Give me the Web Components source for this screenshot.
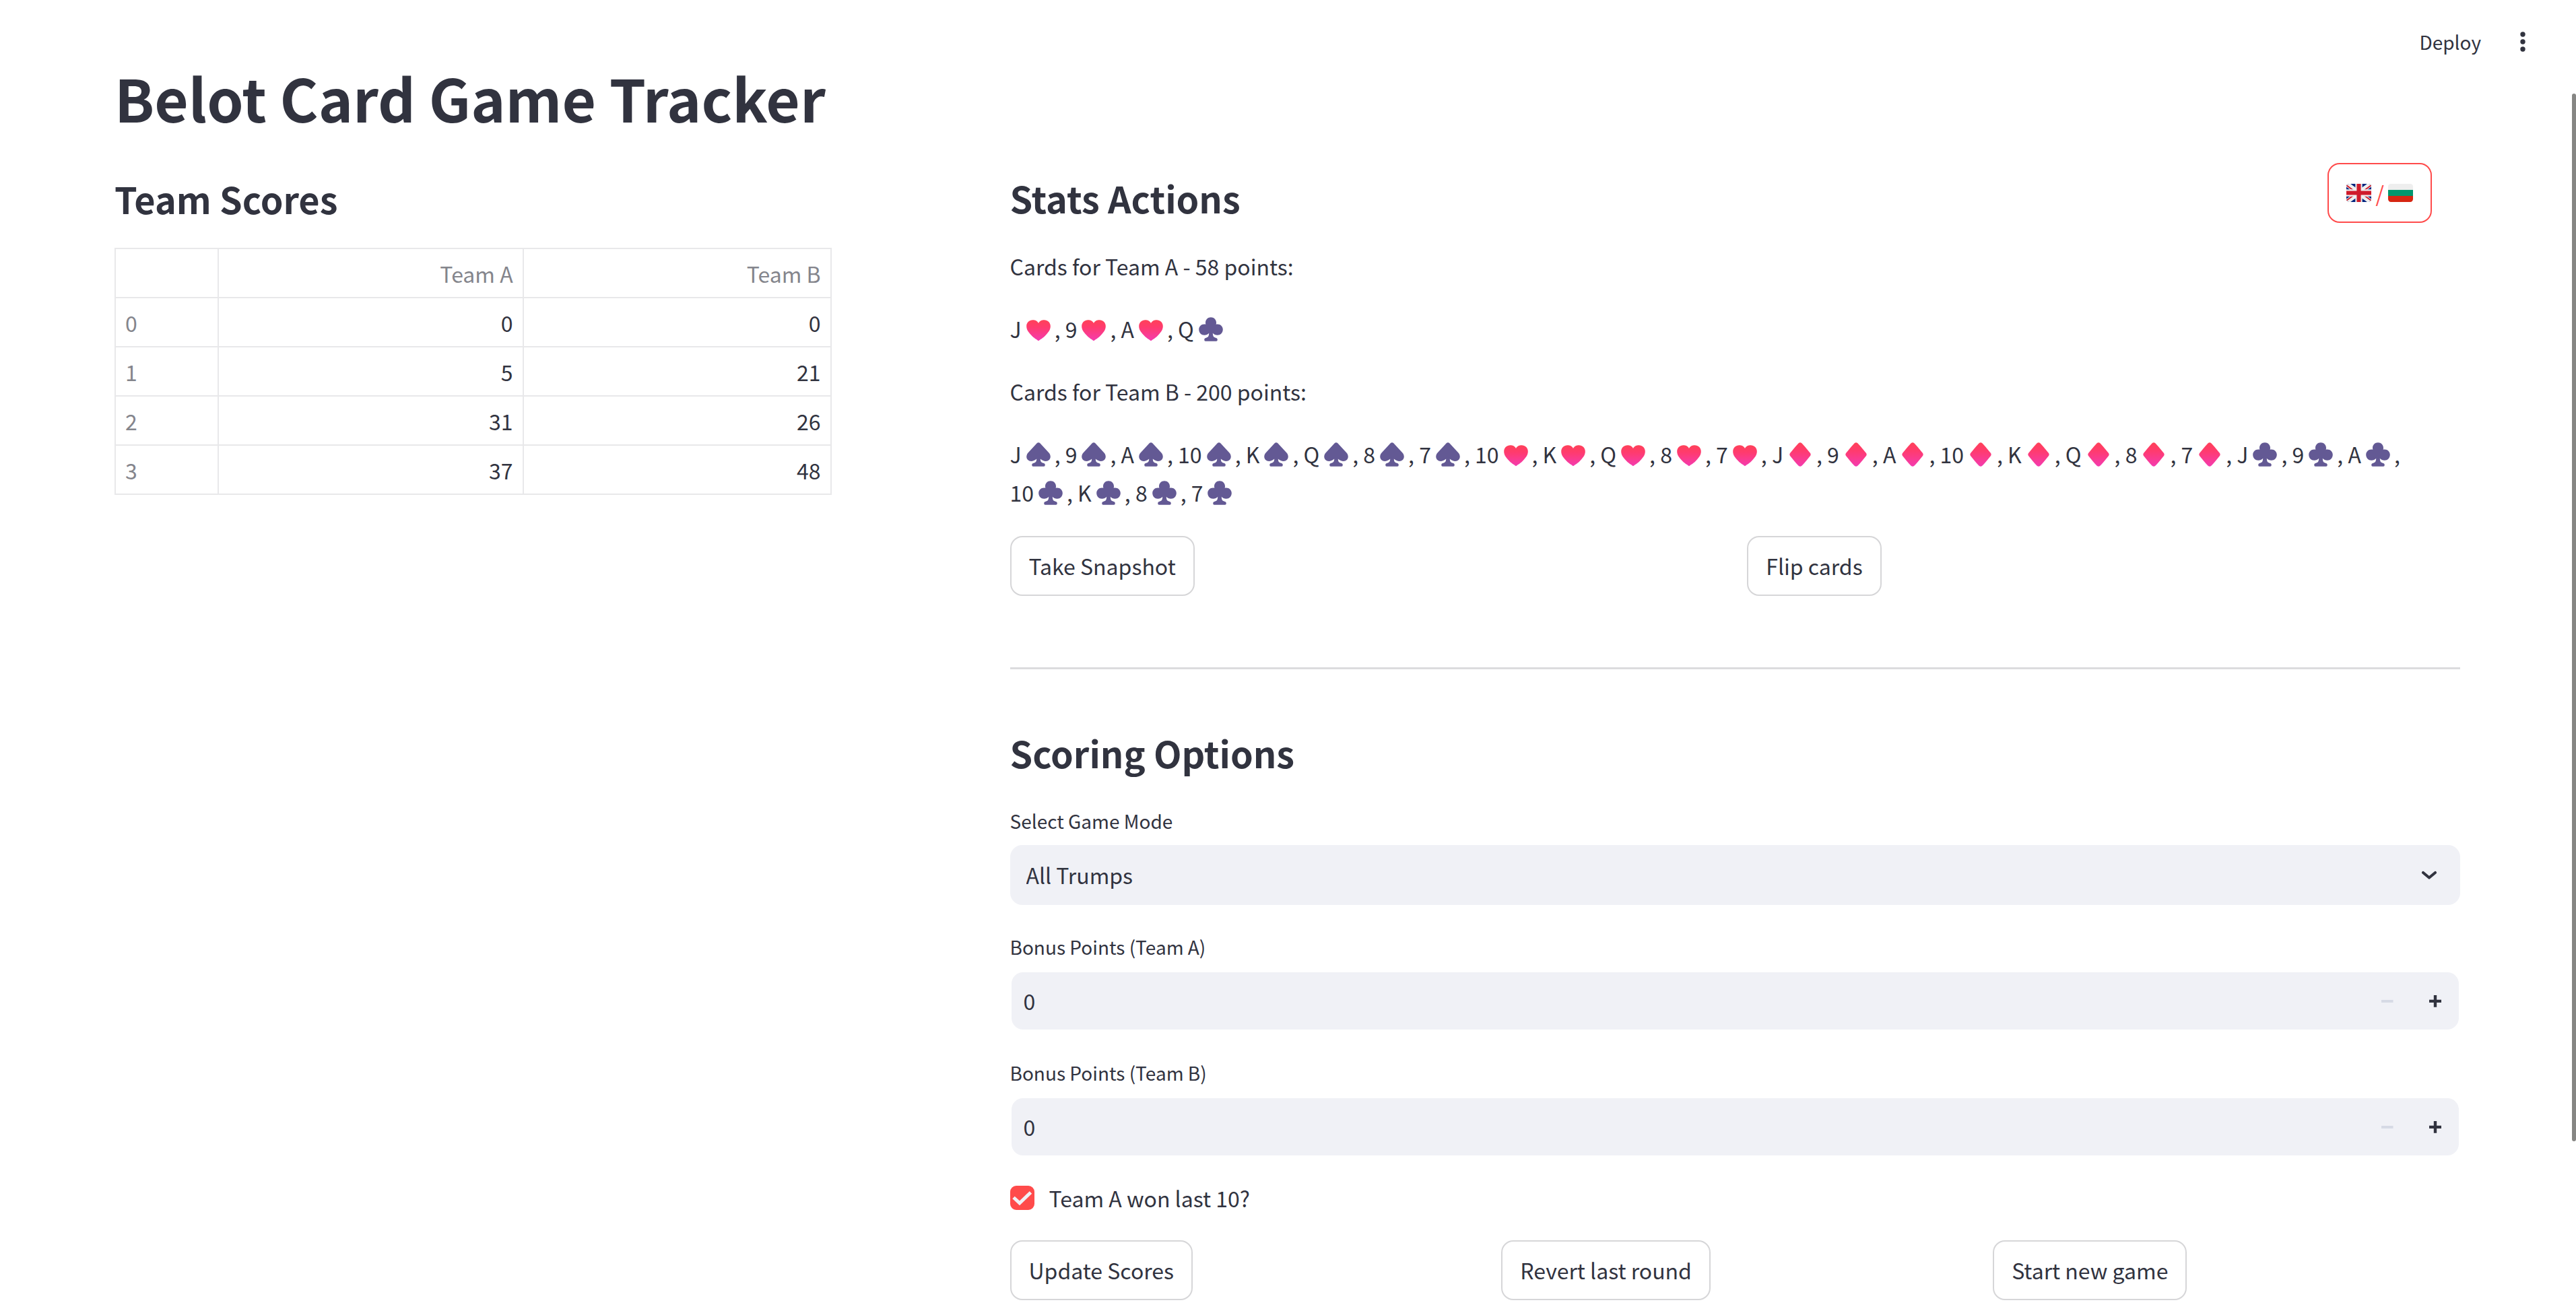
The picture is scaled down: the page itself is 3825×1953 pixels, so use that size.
<!DOCTYPE html>
<html lang="en">
<head>
<meta charset="utf-8">
<title>Belot Card Game Tracker</title>
<style>
  html, body { margin: 0; }
  body {
    --text: #31333f;
    --muted: #84858c;
    --line: #d6d6d8;
    --field: #f0f1f6;
    --accent: #ff4b4b;
    color: var(--text);
    background: #fff;
    font-family: "Noto Sans CJK SC", "Noto Sans", sans-serif;
    font-size: 32px;
    line-height: 57px;
  }
</style>
</head>
<body>
<belot-app></belot-app>

<script>
const define = (name, html, setup) => {
  const template = document.createElement('template');
  template.innerHTML = html;
  customElements.define(name, class extends HTMLElement {
    constructor() {
      super();
      this.attachShadow({ mode: 'open' });
    }
    connectedCallback() {
      if (this.shadowRoot.childNodes.length) return;
      this.shadowRoot.append(template.content.cloneNode(true));
      if (setup) setup(this, this.shadowRoot);
    }
  });
};

/* Section heading */
define('section-title', `
  <style>
    :host { display: block; }
    h2 { margin: 0; font-size: 54px; line-height: 74px; font-weight: 600; }
  </style>
  <h2><slot></slot></h2>`);

/* Outlined button */
define('action-button', `
  <style>
    :host { display: block; }
    button {
      display: flex; align-items: center; gap: 6px;
      box-sizing: border-box; height: 89px; padding: 0 26px;
      border: 2px solid var(--line); border-radius: 18px;
      background: #fff; color: inherit; font: inherit; cursor: pointer;
      white-space: nowrap;
    }
    :host([active]) button { border-color: var(--accent); color: var(--accent); }
  </style>
  <button type="button"><slot></slot></button>`);

/* Top bar: deploy and overflow menu */
define('app-toolbar', `
  <style>
    :host { display: flex; justify-content: flex-end; align-items: center; gap: 44px; padding: 40px 61px 2px 0; height: 44px; }
    button { display: flex; align-items: center; padding: 0; border: 0; background: none; color: inherit; font: inherit; font-size: 28px; line-height: 44px; cursor: pointer; }
  </style>
  <button type="button">Deploy</button>
  <button type="button" aria-label="Main menu">
    <svg width="36" height="36" viewBox="0 0 36 36" fill="currentColor"><circle cx="18" cy="7" r="3.7"/><circle cx="18" cy="18" r="3.7"/><circle cx="18" cy="29" r="3.7"/></svg>
  </button>`);

/* Suit symbols */
const RED = id => `<defs><linearGradient id="${id}" x1="0" y1="0" x2="0" y2="1"><stop offset="0" stop-color="#ff4158"/><stop offset=".35" stop-color="#ff3b6e"/><stop offset="1" stop-color="#f43bb0"/></linearGradient></defs>`;
const SUITS = {
  hearts: RED('h') + '<path fill="url(#h)" d="M18 35.2C15 33 11.500 31.500 7 26.500C2.500 21.500.2 18.500.2 13.200C.2 8 4.500 4.200 9.500 4.200C13 4.200 16.300 5.500 18 9C19.700 5.500 23 4.200 26.500 4.200C31.500 4.200 35.800 8 35.800 13.200C35.800 18.500 33.500 21.500 29 26.500C24.500 31.500 21 33 18 35.200Z"/>',
  diamonds: RED('d') + '<path fill="url(#d)" d="M15.900.9Q18-.6 20.100.9Q23 3.500 33 16Q34.300 18 33 20Q23 32.500 20.100 35.100Q18 36.600 15.900 35.100Q13 32.500 3 20Q1.700 18 3 16Q13 3.500 15.900.9Z"/>',
  spades: '<path fill="#635994" d="M15.400 1.400Q18-.8 20.600 1.400L33.500 15.500C36.300 18.800 36.600 23.500 33.800 26C30.800 28.800 25.500 28.600 20.800 24.500C21 28.500 22 29.800 24.500 30.500Q27.800 31.200 27.800 33.500T26 35.800H10Q8.200 35.800 8.200 33.500T11.500 30.500C14 29.800 15 28.500 15.200 24.500C10.500 28.600 5.200 28.800 2.200 26C-.6 23.500-.3 18.800 2.500 15.500Z"/>',
  clubs: '<path fill="#635994" d="M18 .2C22.500.2 26 3.700 26 8.200Q26 9.700 25.600 10.800C31 9.300 35.800 13.300 35.800 18.300C35.800 23.300 32 26.800 27.700 26.800C25 26.800 22.500 25.600 20.800 23.800C21 28.300 22 29.700 24.500 30.500Q27.800 31.200 27.800 33.500T26 35.800H10Q8.200 35.800 8.200 33.500T11.500 30.500C14 29.700 15 28.300 15.200 23.800C13.500 25.600 11 26.800 8.300 26.800C4 26.800.2 23.300.2 18.300C.2 13.300 5 9.300 10.400 10.800Q10 9.700 10 8.200C10 3.700 13.500.2 18 .2Z"/>'
};

/* A card: rank text from the slot, then its suit */
define('playing-card', `
  <style>
    :host { display: inline; white-space: nowrap; }
    svg { width: 36px; height: 36px; margin: 0 6px 0 7px; vertical-align: -5px; }
  </style>
  <slot></slot><svg viewBox="0 0 36 36" role="img"></svg>`, (el, root) => {
  const svg = root.querySelector('svg');
  svg.innerHTML = SUITS[el.getAttribute('suit')];
  svg.setAttribute('aria-label', el.getAttribute('suit'));
  root.querySelector('slot').previousSibling.remove();
});

/* Caption followed by a comma separated list of cards */
define('card-list', `
  <style>
    :host { display: flex; flex-direction: column; gap: 36px; }
    p { margin: 0; }
    .cards { padding-right: 40px; }
    .entry { white-space: nowrap; }
  </style>
  <p><slot></slot></p><p class="cards"></p>`, (el, root) => {
  const names = { S: 'spades', H: 'hearts', D: 'diamonds', C: 'clubs' };
  const cards = el.getAttribute('cards').split(' ');
  root.querySelector('.cards').innerHTML = cards.map((c, i) =>
    `<span class="entry"><playing-card suit="${names[c.slice(-1)]}">${c.slice(0, -1)}</playing-card>${i < cards.length - 1 ? ',' : ''}</span>`
  ).join(' ');
});

/* Score table */
define('score-table', `
  <style>
    :host { display: block; }
    table { width: 100%; border-collapse: collapse; table-layout: fixed; }
    th, td { box-sizing: border-box; height: 73px; padding: 0 14px; border: 2px solid #e8e8ea; text-align: right; font-weight: 400; line-height: 60px; }
    th { color: var(--muted); }
    th:first-child { text-align: left; }
    .index { width: 14.4%; }
    .first { width: 42.600%; }
  </style>
  <table>
    <colgroup><col class="index"><col class="first"><col></colgroup>
    <thead><tr><th></th><th scope="col">Team A</th><th scope="col">Team B</th></tr></thead>
    <tbody></tbody>
  </table>`, (el, root) => {
  root.querySelector('tbody').innerHTML = JSON.parse(el.getAttribute('rows'))
    .map(([a, b], i) => `<tr><th scope="row">${i}</th><td>${a}</td><td>${b}</td></tr>`).join('');
});

/* Drop-down with its label */
define('select-field', `
  <style>
    :host { display: flex; flex-direction: column; gap: 8px; }
    label { font-size: 28px; line-height: 56px; }
    .box { display: grid; align-items: center; }
    .box > * { grid-area: 1 / 1; }
    select { appearance: none; width: 100%; height: 89px; padding: 0 24px; border: 0; border-radius: 18px; background: var(--field); color: inherit; font: inherit; }
    svg { justify-self: end; margin-right: 28px; pointer-events: none; }
  </style>
  <label for="mode">Select Game Mode</label>
  <div class="box">
    <select id="mode"><option>All Trumps</option><option>No Trumps</option><option>Spades</option><option>Hearts</option><option>Diamonds</option><option>Clubs</option></select>
    <svg width="36" height="36" viewBox="0 0 36 36" fill="none" stroke="currentColor" stroke-width="4.200" stroke-linecap="round" stroke-linejoin="round"><path d="M9 14L18 21.500L27 14"/></svg>
  </div>`);

/* Number field with step buttons */
define('number-field', `
  <style>
    :host { display: flex; flex-direction: column; gap: 8px; }
    label { font-size: 28px; line-height: 56px; }
    .box { display: flex; box-sizing: border-box; height: 89px; border: 2px solid transparent; border-radius: 19px; background: var(--field) padding-box; overflow: hidden; }
    input { flex: 1; min-width: 0; padding: 0 18px; border: 0; background: none; color: inherit; font: inherit; outline: 0; }
    button { display: flex; align-items: center; justify-content: center; width: 71px; padding: 0; border: 0; background: none; color: inherit; }
    button:disabled { color: #d6dae5; }
  </style>
  <label for="points"><slot></slot></label>
  <div class="box">
    <input id="points" type="text" inputmode="numeric" value="0">
    <button type="button" aria-label="Decrease" disabled><svg width="18" height="18" viewBox="0 0 18 18"><path fill="currentColor" d="M0 7H17.500V11H0Z"/></svg></button>
    <button type="button" aria-label="Increase"><svg width="18" height="18" viewBox="0 0 18 18"><path fill="currentColor" d="M6.800 0H11.200V6.800H18V11H11.200V17.800H6.800V11H0V6.800H6.800Z"/></svg></button>
  </div>`);

/* Tick box with its label */
define('check-field', `
  <style>
    :host { display: block; }
    label { display: flex; width: fit-content; align-items: center; gap: 22px; line-height: 54px; }
    .box { display: grid; }
    .box > * { grid-area: 1 / 1; }
    input { appearance: none; width: 36px; height: 36px; margin: 0; border: 2px solid var(--line); border-radius: 9px; }
    input:checked { background: var(--accent); border-color: var(--accent); }
    svg { pointer-events: none; visibility: hidden; }
    input:checked + svg { visibility: visible; }
  </style>
  <label>
    <span class="box"><input type="checkbox" checked><svg width="36" height="36" viewBox="0 0 36 36" fill="none" stroke="#f0f1f6" stroke-width="5"><path d="M5 17.500L14 25.800L30.500 10"/></svg></span>
    <span><slot></slot></span>
  </label>`);

define('flag-icon', `
  <style>:host { display: flex; } svg { width: 37px; height: 27px; }</style>
  <svg viewBox="0 0 36 26" preserveAspectRatio="none"></svg>`, (el, root) => {
  const flags = {
    gb: '<defs><clipPath id="r"><rect width="36" height="26" rx="4"/></clipPath></defs><g clip-path="url(#r)"><rect width="36" height="26" fill="#00247d"/><path d="M0 0L36 26M36 0L0 26" stroke="#eee" stroke-width="7"/><path d="M0 2L15 13M21 13L36 24M0 24L15 13M21 13L36 2" stroke="#cf1b2b" stroke-width="1.800"/><path d="M18 0V26M0 13H36" stroke="#eee" stroke-width="10"/><path d="M18 0V26M0 13H36" stroke="#cf1b2b" stroke-width="6"/></g>',
    bg: '<defs><clipPath id="r"><rect width="36" height="26" rx="4"/></clipPath></defs><g clip-path="url(#r)"><rect width="36" height="9" fill="#eee"/><rect y="8.700" width="36" height="9" fill="#00966e"/><rect y="17.300" width="36" height="9" fill="#d62612"/></g>'
  };
  root.querySelector('svg').innerHTML = flags[el.getAttribute('country')];
});

define('stats-panel', `
  <style>
    :host { display: flex; flex-direction: column; gap: 36px; }
    header { display: flex; justify-content: space-between; align-items: flex-end; padding-right: 42px; }
    .lists { display: flex; flex-direction: column; gap: 36px; }
    .row { display: grid; grid-template-columns: 1fr 1fr; gap: 36px; justify-items: start; }
  </style>
  <header>
    <section-title>Stats Actions</section-title>
    <action-button active><flag-icon country="gb"></flag-icon><span>/</span><flag-icon country="bg"></flag-icon></action-button>
  </header>
  <div class="lists">
    <card-list cards="JH 9H AH QC">Cards for Team A - 58 points:</card-list>
    <card-list cards="JS 9S AS 10S KS QS 8S 7S 10H KH QH 8H 7H JD 9D AD 10D KD QD 8D 7D JC 9C AC 10C KC 8C 7C">Cards for Team B - 200 points:</card-list>
  </div>
  <div class="row">
    <action-button>Take Snapshot</action-button>
    <action-button>Flip cards</action-button>
  </div>`);

define('scoring-panel', `
  <style>
    :host { display: flex; flex-direction: column; gap: 36px; }
    .fields { display: flex; flex-direction: column; gap: 34px; }
    .row { display: grid; grid-template-columns: repeat(3, 1fr); gap: 36px; justify-items: start; }
  </style>
  <section-title>Scoring Options</section-title>
  <div class="fields">
    <select-field></select-field>
    <number-field>Bonus Points (Team A)</number-field>
    <number-field>Bonus Points (Team B)</number-field>
    <check-field>Team A won last 10?</check-field>
  </div>
  <div class="row">
    <action-button>Update Scores</action-button>
    <action-button>Revert last round</action-button>
    <action-button>Start new game</action-button>
  </div>`);

define('belot-app', `
  <style>
    :host { display: block; }
    main { padding: 0 172px 20px 170px; }
    h1 { margin: 0; font-size: 87px; line-height: 116px; font-weight: 700; }
    .columns { display: grid; grid-template-columns: 87fr 176fr; gap: 265px; margin-top: 40px; }
    .scores { display: flex; flex-direction: column; gap: 36px; padding-top: 16px; }
    hr { width: 100%; margin: 106px 0 87px; border: 0; border-top: 3px solid #dcdcde; }
    /* Overlay scroll thumb on the window's right edge */
    .thumb { position: fixed; top: 139px; bottom: 258px; right: 0; width: 6px; border-radius: 3px; background: #868684; }
  </style>
  <app-toolbar></app-toolbar>
  <main>
    <h1>Belot Card Game Tracker</h1>
    <div class="columns">
      <section class="scores">
        <section-title>Team Scores</section-title>
        <score-table rows="[[0,0],[5,21],[31,26],[37,48]]"></score-table>
      </section>
      <section>
        <stats-panel></stats-panel>
        <hr>
        <scoring-panel></scoring-panel>
      </section>
    </div>
  </main>
  <div class="thumb"></div>`);
</script>
</body>
</html>
